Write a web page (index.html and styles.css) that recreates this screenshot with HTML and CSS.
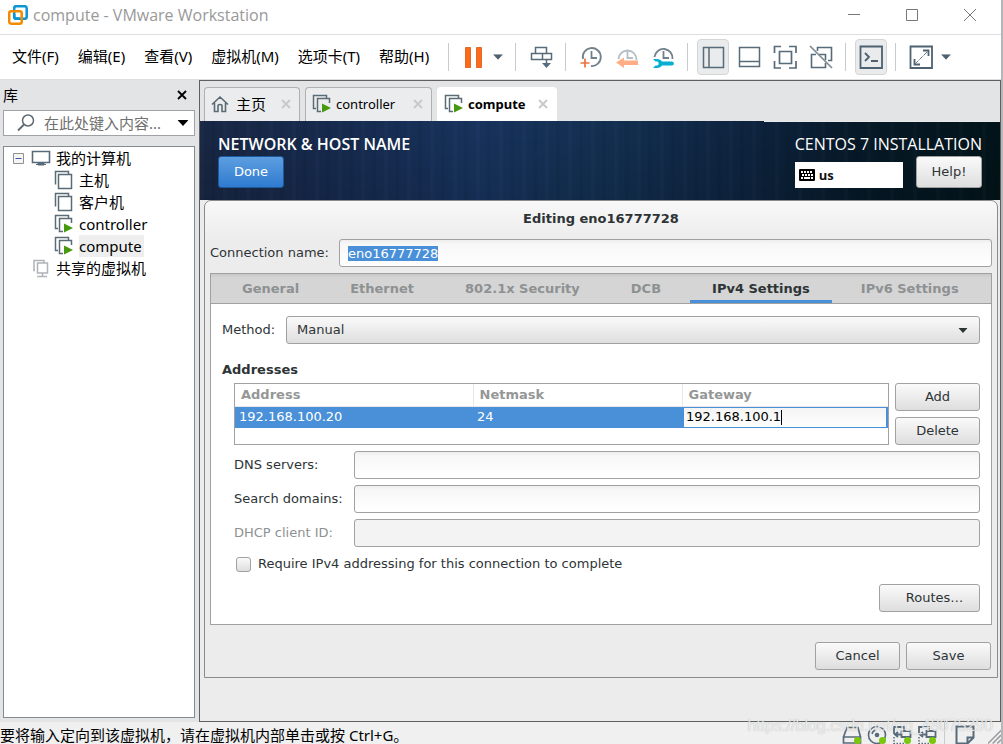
FILE: index.html
```
<!DOCTYPE html>
<html lang="zh-CN">
<head>
<meta charset="utf-8">
<title>compute - VMware Workstation</title>
<link rel="stylesheet" href="styles.css">
</head>
<body>
<svg class="defs" aria-hidden="true">
  <symbol id="vm" viewBox="0 0 20 20"><path d="M1.500 14.500V1.500h13v3M4.500 18.500v-14h13v14z" fill="none" stroke="#5a6b76" stroke-width="1.500"/></symbol>
  <symbol id="vm-on" viewBox="0 0 20 20"><path d="M4 14.500H1.500v-13h13V4M9 17.500H5.500v-13h12V9" fill="none" stroke="#5a6b76" stroke-width="1.500"/><path d="M10 9.500v9l9-4.500z" fill="#46990f"/></symbol>
  <symbol id="x" viewBox="0 0 10 10"><path d="M1 1l8 8M9 1l-8 8" fill="none" stroke="currentColor" stroke-width="1.800"/></symbol>
  <symbol id="down" viewBox="0 0 11 6"><path d="M0 0h11L5.500 6z" fill="currentColor"/></symbol>
  <symbol id="net" viewBox="0 0 20 20"><path d="M2 9V2h10v2.500M9.500 6h9v6h-9zM3 9.500h6M6 7l-3 2.500L6 12" fill="none" stroke="#586b7a" stroke-width="1.800"/><path d="M2 12v6.500h10" fill="none" stroke="#586b7a" stroke-width="1.500" stroke-dasharray="1.500 1.500"/><circle cx="15.500" cy="15.500" r="3.500" fill="#7ac70c"/></symbol>
</svg>
<header class="titlebar">
  <svg class="logo" viewBox="0 0 20 20"><rect x="6.200" y="1.200" width="12.500" height="12.500" rx="2" fill="none" stroke="#0b95d3" stroke-width="2.500"/><rect x="1.200" y="6.200" width="12.500" height="12.500" rx="2" fill="none" stroke="#f38b00" stroke-width="2.500"/><path d="M6.200 9v2.500a2 2 0 0 0 2 2H12" fill="none" stroke="#0b95d3" stroke-width="2.500"/></svg>
  <span class="window-title">compute - VMware Workstation</span>
  <button class="win-btn" aria-label="最小化"><svg viewBox="0 0 12 12"><path d="M0 5.500h12" stroke="#777"/></svg></button>
  <button class="win-btn" aria-label="最大化"><svg viewBox="0 0 12 12"><path d="M.5.500h11v11H.5z" fill="none" stroke="#777"/></svg></button>
  <button class="win-btn" aria-label="关闭"><svg viewBox="0 0 12 12"><path d="M0 0l12 12M12 0L0 12" stroke="#777"/></svg></button>
</header>
<div class="menubar">
  <nav class="menus">
    <button>文件(F)</button><button>编辑(E)</button><button>查看(V)</button><button>虚拟机(M)</button><button>选项卡(T)</button><button>帮助(H)</button>
  </nav>
  <div class="toolbar">
    <span class="sep"></span>
    <button class="tool" aria-label="挂起"><svg viewBox="0 0 24 24"><path d="M4.500 2.500h5v20h-5zM15.500 2.500h5v20h-5z" fill="#ff6a1a" stroke="#dc6b2d"/></svg></button>
    <button class="arrow" aria-label="电源选项"><svg viewBox="0 0 11 6"><use href="#down"/></svg></button>
    <span class="sep"></span>
    <button class="tool" aria-label="发送按键"><svg viewBox="0 0 24 24"><path d="M6.500 8V2.500h11V8M2.500 8.500h20v6h-20zM13.500 8.500v6M17.500 14v7" fill="none" stroke="#586b7a" stroke-width="1.500"/><path d="M13 18h9l-4.500 5z" fill="#586b7a"/></svg></button>
    <span class="sep"></span>
    <button class="tool" aria-label="拍摄快照"><svg viewBox="0 0 24 24"><path d="M4 14A9 9 0 1 1 12 21M12.500 6v7H18" fill="none" stroke="#71818b" stroke-width="1.800"/><path d="M6 13.500v9M1.500 18h9" stroke="#ee713c" stroke-width="1.700"/></svg></button>
    <button class="tool" aria-label="恢复快照"><svg viewBox="0 0 24 24"><path d="M3.500 14a9 9 0 1 1 18 1M12.500 6v7H18" fill="none" stroke="#b5bec4" stroke-width="1.800"/><path d="M1 17.500L9 12.500v3h14v4.500H9v3z" fill="#ffae87"/></svg></button>
    <button class="tool" aria-label="管理快照"><svg viewBox="0 0 24 24"><path d="M3.500 12a9 9 0 1 1 18 2M12.500 6v7H18" fill="none" stroke="#71818b" stroke-width="1.800"/><path d="M2 14h4c2.500 0 4 1 5 2.500h10c2.500 0 2.500 4 0 4H11c-1 1.500-2.500 2.500-5 2.500H2l2.500-2.500h2c1.500-.5 1.500-3.500 0-4h-2z" fill="#06afd2"/></svg></button>
    <span class="sep"></span>
    <button class="tool active" aria-label="显示库"><svg viewBox="0 0 24 24"><path d="M2.500 2.500h20v20h-20zM8 2.500v20" fill="none" stroke="#586b7a" stroke-width="1.500"/></svg></button>
    <button class="tool" aria-label="缩略图栏"><svg viewBox="0 0 24 24"><path d="M2.500 2.500h20v19h-20zM2.500 16.500h20" fill="none" stroke="#586b7a" stroke-width="1.500"/></svg></button>
    <button class="tool" aria-label="全屏"><svg viewBox="0 0 24 24"><path d="M1.500 8V1.500H8M16 1.500h7V8M23 16v7h-7M8 23H1.500v-7M6.500 6.500h12v12h-12z" fill="none" stroke="#586b7a" stroke-width="1.700"/></svg></button>
    <button class="tool" aria-label="Unity"><svg viewBox="0 0 24 24"><path d="M8.500 6V2.500h14v13H19M7 9.500H2.500v13h14V18M10 9.500h6.500V15" fill="none" stroke="#586b7a" stroke-width="1.600"/><path d="M1 1l22 22" stroke="#7d8b95" stroke-width="1.700"/></svg></button>
    <span class="sep"></span>
    <button class="tool active" aria-label="控制台视图"><svg viewBox="0 0 24 24"><path d="M1.500 1.500h21.500v21.500H1.500zM6 8l4 4-4 4M12 16h7" fill="none" stroke="#4d6170" stroke-width="1.800"/></svg></button>
    <span class="sep"></span>
    <button class="tool" aria-label="拉伸客户机"><svg viewBox="0 0 24 24"><path d="M1.500 1.500h21.500v21.500H1.500zM14 5.500h5.500V11M5.500 14v5.500H11" fill="none" stroke="#4d6170" stroke-width="1.800"/><path d="M6 19L19 6" stroke="#6f7f8a" stroke-dasharray="5 1"/></svg></button>
    <button class="arrow" aria-label="拉伸选项"><svg viewBox="0 0 11 6"><use href="#down"/></svg></button>
  </div>
</div>
<main class="workspace">
  <aside class="sidebar">
    <div class="side-head"><h2>库</h2><button aria-label="关闭库"><svg viewBox="0 0 10 10"><use href="#x"/></svg></button></div>
    <div class="search">
      <svg class="lens" viewBox="0 0 18 18"><circle cx="11" cy="6.500" r="5.500" fill="none" stroke="#5d6a74" stroke-width="1.500"/><path d="M7 10.500L1 16.500" stroke="#5d6a74" stroke-width="1.800"/></svg>
      <input type="text" aria-label="搜索" placeholder="在此处键入内容...">
      <button aria-label="搜索选项"><svg viewBox="0 0 11 6"><use href="#down"/></svg></button>
    </div>
    <ul class="tree">
      <li><svg class="fold" viewBox="0 0 11 11"><path d="M.5.500h10v10H.5z" fill="#f5f5f5" stroke="#919191"/><path d="M2.500 5.500h6" stroke="#3b53a8"/></svg><svg class="node-icon" viewBox="0 0 20 20"><path d="M1.500 3.500h17v11h-17z" fill="none" stroke="#586b7a" stroke-width="1.600"/><path d="M7 15h6v2H7zM5 16.500h10" stroke="#586b7a" fill="#586b7a"/></svg><span>我的计算机</span></li>
      <li class="child"><svg class="node-icon" viewBox="0 0 20 20"><use href="#vm"/></svg><span>主机</span></li>
      <li class="child"><svg class="node-icon" viewBox="0 0 20 20"><use href="#vm"/></svg><span>客户机</span></li>
      <li class="child"><svg class="node-icon" viewBox="0 0 20 20"><use href="#vm-on"/></svg><span>controller</span></li>
      <li class="child"><svg class="node-icon" viewBox="0 0 20 20"><use href="#vm-on"/></svg><span class="current">compute</span></li>
      <li class="shared"><svg class="node-icon" viewBox="0 0 20 20"><path d="M4 12.500H3v-10h10v2M6.500 5h10v10h-10zM11.500 15v3M6 18.500h10" fill="none" stroke="#aeb4b8" stroke-width="1.500"/></svg><span>共享的虚拟机</span></li>
    </ul>
  </aside>
  <section class="viewer">
    <div class="tabs">
      <div class="tab home"><svg class="tab-icon" viewBox="0 0 18 18"><path d="M1 9.500L9 2l8 7.500M3.500 8v8.500H7V11c0-2 4-2 4 0v5.500h3.500V8" fill="none" stroke="#5a6b76" stroke-width="1.600"/></svg><span>主页</span><button aria-label="关闭主页"><svg viewBox="0 0 10 10"><use href="#x"/></svg></button></div>
      <div class="tab controller"><svg class="tab-icon" viewBox="0 0 20 20"><use href="#vm-on"/></svg><span>controller</span><button aria-label="关闭 controller"><svg viewBox="0 0 10 10"><use href="#x"/></svg></button></div>
      <div class="tab selected"><svg class="tab-icon" viewBox="0 0 20 20"><use href="#vm-on"/></svg><span>compute</span><button aria-label="关闭 compute"><svg viewBox="0 0 10 10"><use href="#x"/></svg></button></div>
    </div>
    <div class="banner">
      <div class="banner-left"><h1>NETWORK &amp; HOST NAME</h1><button class="done">Done</button></div>
      <div class="banner-right">
        <p>CENTOS 7 INSTALLATION</p>
        <div class="banner-tools">
          <div class="layout"><svg viewBox="0 0 16 12"><rect width="16" height="12" rx="1" fill="#000"/><path d="M2 3h12M3 6h11" stroke="#fff" stroke-width="2" stroke-dasharray="2 1"/><path d="M2 9h2M5 9h6M12 9h2" stroke="#fff" stroke-width="2"/></svg><b>us</b></div>
          <button class="btn help">Help!</button>
        </div>
      </div>
    </div>
    <form class="dialog" onsubmit="return false">
      <h2 class="dialog-title">Editing eno16777728</h2>
      <div class="name-row"><label for="conn">Connection name:</label><input class="field" id="conn" type="text" value="eno16777728"></div>
      <div class="notebook">
        <div class="pages">
          <button type="button">General</button><button type="button">Ethernet</button><button type="button">802.1x Security</button><button type="button">DCB</button><button type="button" class="on">IPv4 Settings</button><button type="button">IPv6 Settings</button>
        </div>
        <div class="page">
          <div class="method-row"><label for="method">Method:</label><div class="select"><select id="method"><option>Manual</option></select><svg viewBox="0 0 11 6"><use href="#down"/></svg></div></div>
          <h3>Addresses</h3>
          <div class="settings">
            <div class="address-row">
              <div class="table-box">
                <table>
                  <colgroup><col class="c1"><col class="c2"><col></colgroup>
                  <thead><tr><th>Address</th><th>Netmask</th><th>Gateway</th></tr></thead>
                  <tbody><tr><td>192.168.100.20</td><td>24</td><td class="editing"><div class="cell-edit"><input type="text" aria-label="Gateway" value="192.168.100.1"></div></td></tr></tbody>
                </table>
              </div>
              <div class="address-actions"><button type="button" class="btn">Add</button><button type="button" class="btn">Delete</button></div>
            </div>
            <div class="form-row"><label for="dns">DNS servers:</label><input class="field" id="dns" type="text"></div>
            <div class="form-row"><label for="search">Search domains:</label><input class="field" id="search" type="text"></div>
            <div class="form-row off"><label for="dhcp">DHCP client ID:</label><input class="field" id="dhcp" type="text" disabled></div>
            <label class="check"><input type="checkbox">Require IPv4 addressing for this connection to complete</label>
            <button type="button" class="btn routes">Routes…</button>
          </div>
        </div>
      </div>
      <div class="dialog-actions"><button type="button" class="btn">Cancel</button><button class="btn">Save</button></div>
    </form>
  </section>
</main>
<footer class="status">
  <span class="hint">要将输入定向到该虚拟机，请在虚拟机内部单击或按 Ctrl+G。</span>
  <div class="devices">
    <svg viewBox="0 0 20 20"><path d="M1.500 12L5 2.500h11l2.500 9.500M1.500 12h17v6h-17z" fill="none" stroke="#586b7a" stroke-width="1.700"/><circle cx="15.500" cy="15.500" r="3.500" fill="#7ac70c"/></svg>
    <svg viewBox="0 0 20 20"><circle cx="10" cy="10" r="8.500" fill="none" stroke="#586b7a" stroke-width="1.600"/><circle cx="10" cy="10" r="2.300" fill="#586b7a"/><path d="M5 9a5 5 0 0 1 4-4" fill="none" stroke="#586b7a" stroke-width="1.400"/><circle cx="15.500" cy="15.500" r="3.500" fill="#7ac70c"/></svg>
    <svg viewBox="0 0 20 20"><use href="#net"/></svg>
    <svg viewBox="0 0 20 20"><use href="#net"/></svg>
    <span class="sep"></span>
    <svg viewBox="0 0 20 20"><path d="M1.500 1.500h17v11l-6 6h-11zM18 12.500h-5.500V18" fill="none" stroke="#586b7a" stroke-width="2"/></svg>
  </div>
  <svg class="grip" viewBox="0 0 14 14"><path d="M0 14L14 0M5 14l9-9M10 14l4-4" stroke="#9a9a9a" stroke-width="1.600"/></svg>
  <span class="watermark">https://blog.csdn.net/qq_48075290</span>
</footer>
<script>document.getElementById("conn").select();</script>
</body>
</html>
```
FILE: styles.css
```
* { box-sizing: border-box; }
body {
  margin: 0;
  height: 100vh;
  display: flex;
  flex-direction: column;
  overflow: hidden;
  border-right: 2px solid #b4b6b8;
  background: #fff;
  color: #000;
  font: 15px/20px "Noto Sans", "Noto Sans CJK SC", sans-serif;
}
button, input, select { font: inherit; color: inherit; }
button { border: 0; padding: 0; background: none; }
h1, h2, h3, p, ul { margin: 0; padding: 0; font-weight: 400; }
svg { display: block; flex: none; }
.defs { position: absolute; width: 0; height: 0; }

.titlebar { display: flex; height: 35px; flex: none; align-items: center; padding: 0 2px 4px 8px; border-bottom: 1px solid #dedede; }
.logo { width: 20px; height: 20px; }
.window-title { flex: 1; margin-left: 5px; font: 16px/20px "Open Sans", sans-serif; color: #999; }
.win-btn { width: 58px; height: 30px; display: grid; place-items: center; }
.win-btn svg { width: 12px; height: 12px; }

.menubar { display: flex; height: 45px; flex: none; align-items: center; border-bottom: 1px solid #dedede; }
.menus { display: flex; gap: 19px; padding: 0 0 3px 12px; width: 448px; white-space: nowrap; }
.toolbar { display: flex; align-items: center; gap: 4px; color: #4d6170; }
.sep { width: 1px; height: 28px; background: #c8cacc; }
.toolbar .sep { margin: 0 5px 0 4px; }
.toolbar .sep:first-child { margin: 0 4px 0 0; }
.tool { width: 32px; height: 36px; display: grid; place-items: center; border-radius: 4px; }
.tool svg { width: 24px; height: 24px; }
.tool.active { background: #e9ebed; border: 1px solid #d4d6d6; }
.arrow { width: 14px; }
.arrow svg { width: 10px; height: 6px; }

.workspace { flex: 1; display: flex; min-height: 0; background: #e3e4e6; }
.sidebar { width: 199px; flex: none; display: flex; flex-direction: column; padding: 0 4px 4px 3px; }
.side-head { height: 30px; display: flex; align-items: center; justify-content: space-between; padding-right: 8px; }
.side-head h2 { font-size: 15px; }
.side-head svg { width: 10px; height: 10px; }
.search { display: flex; height: 26px; align-items: center; margin-bottom: 10px; padding: 0 5px 0 13px; border: 1px solid #a0a3a6; background: #fff; }
.lens { width: 18px; height: 18px; }
.search input { flex: 1; width: 0; min-width: 0; margin-left: 9px; padding: 0; border: 0; outline: 0; background: none; }
.search input::placeholder { color: #707070; }
.search button svg { width: 12px; height: 6px; }
.tree { flex: 1; list-style: none; padding: 0 0 0 9px; border: 1px solid #858a8e; background: #fff; }
.tree li { display: flex; height: 22px; align-items: center; gap: 5px; }
.tree .child { padding-left: 41px; }
.tree .shared { padding-left: 18px; }
.fold { width: 11px; height: 11px; margin-right: 2px; }
.node-icon { width: 20px; height: 20px; }
.tree .current { padding-right: 2px; background: #eee; line-height: 22px; }

.viewer { flex: 1; min-width: 0; display: flex; flex-direction: column; border: 1px solid #5e6062; background: #ececec; }
.tabs { display: flex; height: 40px; flex: none; align-items: flex-end; gap: 5px; padding-left: 4px; background: #e3e4e6; }
.tab { display: flex; height: 34px; align-items: center; padding: 0 8px 2px; border: 1px solid #aeb0b2; border-bottom: 0; border-radius: 4px 4px 0 0; background: #ebecee; font: 13px/18px "Noto Sans", "Noto Sans CJK SC", sans-serif; }
.tab.home { width: 96px; padding-left: 6px; font-size: 15px; }
.tab.controller { width: 127px; padding-left: 6px; }
.tab.selected { width: 120px; padding-left: 6px; border-color: #fff; background: #fff; font-weight: 700; }
.tab-icon { width: 20px; height: 20px; margin-right: 4px; }
.tab.home .tab-icon { width: 18px; height: 18px; margin-right: 7px; }
.tab span { flex: 1; }
.tab button { color: #c8c8c8; }
.tab button svg { width: 10px; height: 10px; }

.banner { display: flex; justify-content: space-between; height: 79px; flex: none; padding: 13px 18px 0 18px; color: #fff; font-family: "Open Sans", sans-serif;
  background:
    linear-gradient(#e9eaeb, #e9eaeb) right top / 236px 1px no-repeat,
    repeating-linear-gradient(90deg, rgba(255,255,255,.015) 0 4px, transparent 4px 11px, rgba(0,0,0,.05) 11px 15px, transparent 15px 23px),
    linear-gradient(rgba(0,0,0,0), rgba(0,0,0,.12)),
    linear-gradient(90deg, #182744 0%, #162b50 18%, #17335d 35%, #122f50 52%, #0e2440 68%, #061a29 82%, #02141a 100%); }
.banner h1 { font-size: 16px; line-height: 20px; font-weight: 600; margin-bottom: 2px; }
.banner p { font-size: 16px; line-height: 20px; margin-bottom: 2px; }
.done { width: 66px; height: 32px; border: 1px solid #1d5a9c; border-radius: 3px; background: linear-gradient(#5d9ee0, #2f7bd0); font: 13px/18px "DejaVu Sans", sans-serif; }
.banner-tools { display: flex; justify-content: space-between; align-items: flex-start; }
.layout { display: flex; width: 108px; height: 26px; margin-top: 6px; padding-left: 4px; align-items: center; gap: 4px; background: #fff; color: #111; font-size: 13px; }
.layout svg { width: 16px; height: 12px; }

.btn { height: 28px; border: 1px solid #a1a1a1; border-radius: 3px; background: linear-gradient(#fafafa, #dedede); color: #2e3436; font: 13px/18px "DejaVu Sans", sans-serif; }
.btn.help { width: 66px; height: 32px; }
.dialog { margin: 0 2px 0 4px; padding: 0 5px 7px 5px; border: 1px solid #8b8b8b; border-radius: 7px 7px 0 0; background: linear-gradient(#f8f8f8, #ececec 40px); color: #2e3436; font: 13px/18px "DejaVu Sans", sans-serif; }
.dialog-title { padding: 9px 0 11px; text-align: center; font-size: 13px; line-height: 18px; font-weight: 700; }
.name-row, .method-row, .form-row { display: flex; align-items: center; }
.name-row label { width: 129px; }
.field { flex: 1; min-width: 0; height: 28px; padding: 0 8px; border: 1px solid #a1a1a1; border-radius: 3px; outline: 0; background: linear-gradient(#ededed, #f7f7f7 4px, #fff); }
.field::selection { background: #4a90d9; color: #fff; }
.field:disabled { background: #f3f3f3; }
.notebook { margin-top: 6px; border: 1px solid #a1a1a1; background: #fff; }
.pages { display: flex; gap: 7px; padding-left: 9px; border-bottom: 1px solid #a1a1a1; background: linear-gradient(#c8c8c8, #d5d5d5 4px); }
.pages button { height: 29px; padding: 3px 22px 0; color: #8e9192; font-weight: 700; white-space: nowrap; border-bottom: 3px solid transparent; }
.pages .on { color: #2e3436; border-color: #4a90d9; }
.page { padding: 12px 11px; }
.method-row label { width: 64px; }
.select { flex: 1; display: grid; align-items: center; }
.select > * { grid-area: 1 / 1; }
.select select { appearance: none; width: 100%; height: 28px; padding: 0 10px; border: 1px solid #a1a1a1; border-radius: 3px; background: linear-gradient(#fafafa, #dedede); }
.select svg { width: 10px; height: 5px; justify-self: end; margin-right: 12px; pointer-events: none; }
.page h3 { margin: 17px 0 4px; font-size: 13px; line-height: 18px; font-weight: 700; }
.settings { display: flex; flex-direction: column; gap: 6px; padding-left: 12px; }
.address-row { display: flex; gap: 6px; }
.table-box { flex: 1; height: 62px; border: 1px solid #a1a1a1; }
table { width: 100%; border-collapse: collapse; table-layout: fixed; }
.c1 { width: 238px; }
.c2 { width: 209px; }
th { height: 22px; padding: 0 6px; text-align: left; color: #959797; border-right: 1px solid #e8e8e8; border-bottom: 1px solid #e8e8e8; }
th:last-child { border-right: 0; }
td { height: 21px; padding: 0 4px; background: #4a90d9; color: #fff; }
td.editing { padding: 1px 2px; }
.cell-edit { display: flex; align-items: center; height: 19px; padding-left: 2px; background: linear-gradient(#f4f4f4, #fff); color: #000; }
.cell-edit input { field-sizing: content; padding: 0; border: 0; outline: 0; background: none; }
.cell-edit::after { content: ""; width: 1px; height: 15px; background: #000; }
.address-actions { display: flex; flex-direction: column; gap: 6px; width: 85px; }
.form-row label { width: 120px; }
.off { color: #8e9192; }
.check { display: flex; align-items: center; gap: 7px; padding-left: 2px; margin-top: 2px; }
.check input { appearance: none; width: 15px; height: 15px; margin: 0; border: 1px solid #a1a1a1; border-radius: 3px; background: linear-gradient(#fafafa, #dedede); }
.routes { align-self: flex-end; width: 101px; margin-top: 5px; padding-left: 10px; }
.dialog-actions { display: flex; justify-content: flex-end; gap: 6px; margin-top: 17px; padding-right: 1px; }
.dialog-actions .btn { width: 85px; }

.status { position: relative; display: flex; height: 22px; flex: none; align-items: center; justify-content: space-between; background: #f0f0f0; }
.hint { flex: 1; margin-top: 3px; white-space: nowrap; }
.devices { display: flex; align-items: center; gap: 5px; margin: 4px 13px 0 0; }
.devices svg { width: 20px; height: 20px; }
.devices .sep { margin: 0 5px 0 2px; }
.grip { width: 13px; height: 14px; align-self: flex-end; }
.watermark { position: absolute; right: 8px; top: -6px; font: 16px/20px "Liberation Sans", sans-serif; color: rgba(255,255,255,.75); text-shadow: 0 0 1px rgba(120,120,120,.6); }
```
